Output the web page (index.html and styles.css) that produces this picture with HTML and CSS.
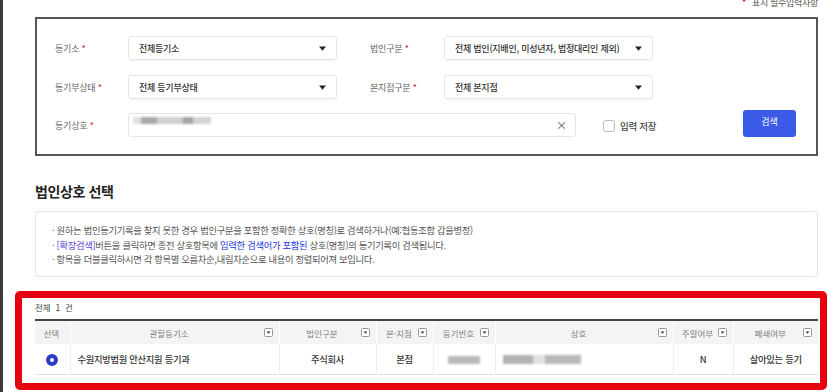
FILE: index.html
```html
<!DOCTYPE html>
<html lang="ko">
  <head>
    <title>법인상호 선택</title>
    <meta charset="UTF-8">
    <link rel="stylesheet" href="styles.css">
  </head>
  <body>
    <div class="page">
      <div class="top-note">
        <span class="req">*</span><span>표시 필수입력사항</span>
      </div>

      <div class="search-box">
        <div class="form-row">
          <label class="lbl">등기소 <span class="req">*</span></label>
          <div class="select">
            <span>전체등기소</span>
            <svg class="caret" width="7" height="5" viewBox="0 0 7 5"><path d="M0 0.5h7L3.5 4.8z" fill="#222"/></svg>
          </div>
          <label class="lbl lbl-2">법인구분 <span class="req">*</span></label>
          <div class="select">
            <span>전체 법인(지배인, 미성년자, 법정대리인 제외)</span>
            <svg class="caret" width="7" height="5" viewBox="0 0 7 5"><path d="M0 0.5h7L3.5 4.8z" fill="#222"/></svg>
          </div>
        </div>
        <div class="form-row row-2">
          <label class="lbl">등기부상태 <span class="req">*</span></label>
          <div class="select">
            <span>전체 등기부상태</span>
            <svg class="caret" width="7" height="5" viewBox="0 0 7 5"><path d="M0 0.5h7L3.5 4.8z" fill="#222"/></svg>
          </div>
          <label class="lbl lbl-2">본지점구분 <span class="req">*</span></label>
          <div class="select">
            <span>전체 본지점</span>
            <svg class="caret" width="7" height="5" viewBox="0 0 7 5"><path d="M0 0.5h7L3.5 4.8z" fill="#222"/></svg>
          </div>
        </div>
        <div class="form-row row-3">
          <label class="lbl">등기상호 <span class="req">*</span></label>
          <div class="text-input">
            <div class="masked">
              <i class="m1"></i><i class="m2"></i><i class="m3"></i><i class="m4"></i><i class="m5"></i>
            </div>
            <span class="clear">×</span>
          </div>
          <label class="save">
            <span class="checkbox"></span>
            <span>입력 저장</span>
          </label>
          <button class="btn-search">검색</button>
        </div>
      </div>

      <h2 class="section-title">법인상호 선택</h2>

      <div class="notice">
        <p>· 원하는 법인등기기록을 찾지 못한 경우 법인구분을 포함한 정확한 상호(명칭)로 검색하거나(예:협동조합 갑을병정)</p>
        <p>· <span class="purple">[확장검색]</span>버튼을 클릭하면 종전 상호항목에 <span class="blue">입력한 검색어가 포함된</span> 상호(명칭)의 등기기록이 검색됩니다.</p>
        <p>· 항목을 더블클릭하시면 각 항목별 오름차순,내림차순으로 내용이 정렬되어져 보입니다.</p>
      </div>

      <div class="result-box">
        <div class="count">전체 &nbsp;1 &nbsp;건</div>
        <table class="result">
          <colgroup>
            <col style="width:35px">
            <col style="width:209px">
            <col style="width:97px">
            <col style="width:57px">
            <col style="width:62px">
            <col style="width:178px">
            <col style="width:60px">
            <col style="width:85px">
          </colgroup>
          <thead>
            <tr>
              <th><div class="th-in"><span class="th-text">선택</span></div></th>
              <th><div class="th-in"><span class="th-text">관할등기소</span><svg class="filter" width="9" height="9" viewBox="0 0 9 9"><rect x="0.5" y="0.5" width="8" height="8" rx="1" fill="#fff" stroke="#999"/><path d="M2.6 3.6h3.8L4.5 5.8z" fill="#333"/></svg></div></th>
              <th><div class="th-in"><span class="th-text">법인구분</span><svg class="filter" width="9" height="9" viewBox="0 0 9 9"><rect x="0.5" y="0.5" width="8" height="8" rx="1" fill="#fff" stroke="#999"/><path d="M2.6 3.6h3.8L4.5 5.8z" fill="#333"/></svg></div></th>
              <th><div class="th-in"><span class="th-text">본·지점</span><svg class="filter" width="9" height="9" viewBox="0 0 9 9"><rect x="0.5" y="0.5" width="8" height="8" rx="1" fill="#fff" stroke="#999"/><path d="M2.6 3.6h3.8L4.5 5.8z" fill="#333"/></svg></div></th>
              <th><div class="th-in"><span class="th-text">등기번호</span><svg class="filter" width="9" height="9" viewBox="0 0 9 9"><rect x="0.5" y="0.5" width="8" height="8" rx="1" fill="#fff" stroke="#999"/><path d="M2.6 3.6h3.8L4.5 5.8z" fill="#333"/></svg></div></th>
              <th><div class="th-in"><span class="th-text">상호</span><svg class="filter" width="9" height="9" viewBox="0 0 9 9"><rect x="0.5" y="0.5" width="8" height="8" rx="1" fill="#fff" stroke="#999"/><path d="M2.6 3.6h3.8L4.5 5.8z" fill="#333"/></svg></div></th>
              <th><div class="th-in"><span class="th-text">주말여부</span><svg class="filter" width="9" height="9" viewBox="0 0 9 9"><rect x="0.5" y="0.5" width="8" height="8" rx="1" fill="#fff" stroke="#999"/><path d="M2.6 3.6h3.8L4.5 5.8z" fill="#333"/></svg></div></th>
              <th><div class="th-in"><span class="th-text">폐쇄여부</span><svg class="filter" width="9" height="9" viewBox="0 0 9 9"><rect x="0.5" y="0.5" width="8" height="8" rx="1" fill="#fff" stroke="#999"/><path d="M2.6 3.6h3.8L4.5 5.8z" fill="#333"/></svg></div></th>
            </tr>
          </thead>
          <tbody>
            <tr>
              <td class="center"><span class="radio"></span></td>
              <td class="left">수원지방법원 안산지원 등기과</td>
              <td class="center">주식회사</td>
              <td class="center">본점</td>
              <td class="center"><span class="masked-no"></span></td>
              <td class="left"><div class="masked-name"><i class="n1"></i><i class="n2"></i><i class="n3"></i></div></td>
              <td class="center">N</td>
              <td class="center">살아있는 등기</td>
            </tr>
          </tbody>
        </table>
      </div>
    </div>
  </body>
</html>
```

FILE: styles.css
```css
body {
  margin: 0;
  padding: 0;
  background-color: #fff;
  color: #333;
  font-family: 'Noto Sans CJK KR', 'Noto Sans', sans-serif;
  overflow: hidden;
}

.page {
  height: 392px;
  border-left: 3px solid #3a3a3a;
  padding: 0 17px 0 32px;
  box-sizing: border-box;
}

.req {
  color: #d7161e;
}

/* top right note */
.top-note {
  height: 17px;
  display: flex;
  justify-content: flex-end;
  align-items: flex-start;
  gap: 6px;
  font-size: 9px;
  color: #555;
  letter-spacing: -0.3px;
}

.top-note span {
  line-height: 10px;
  margin-top: -2px;
}

/* search form */
.search-box {
  border: 2px solid #555;
  padding: 17px 18px 17px 18px;
}

.form-row {
  display: flex;
  align-items: center;
  height: 24px;
  margin-bottom: 15px;
}

.form-row.row-2 {
  margin-bottom: 11px;
}

.form-row.row-3 {
  height: 27px;
  margin-bottom: 0;
  align-items: flex-end;
}

.lbl {
  width: 73px;
  font-size: 9px;
  color: #666;
  letter-spacing: -0.2px;
}

.row-3 .lbl {
  align-self: center;
  padding-top: 4px;
}

.lbl-2 {
  width: 74px;
  margin-left: 33px;
}

.select {
  width: 209px;
  height: 24px;
  box-sizing: border-box;
  border: 1px solid #e6e6e6;
  border-radius: 3px;
  box-shadow: 0 1px 1px rgba(0, 0, 0, 0.04);
  display: flex;
  align-items: center;
  justify-content: space-between;
  padding: 0 10px 0 10px;
  font-size: 9px;
  font-weight: 500;
  color: #333;
  letter-spacing: -0.25px;
}

.caret {
  flex: 0 0 auto;
}

.text-input {
  width: 448px;
  height: 24px;
  box-sizing: border-box;
  border: 1px solid #e6e6e6;
  border-radius: 3px;
  display: flex;
  align-items: center;
  justify-content: space-between;
  padding: 0 8px 0 4px;
}

.masked {
  display: flex;
  width: 90px;
  height: 22px;
  flex-wrap: wrap;
  filter: blur(0.8px);
}

.masked i {
  display: block;
  height: 7px;
  margin-top: 3px;
}

.masked .m1 { width: 8px; background: #e2e2e2; }
.masked .m2 { width: 16px; background: #a9a9a9; }
.masked .m3 { width: 26px; background: #cfcfcf; }
.masked .m4 { width: 10px; background: #a5a5a5; }
.masked .m5 { width: 18px; background: #d4d4d4; }

.clear {
  font-size: 11px;
  color: #555;
}

.save {
  display: flex;
  align-items: center;
  gap: 5px;
  margin-left: 27px;
  align-self: center;
  padding-top: 4px;
  font-size: 9.5px;
  font-weight: 500;
  color: #444;
  letter-spacing: -0.3px;
}

.checkbox {
  width: 12px;
  height: 12px;
  box-sizing: border-box;
  border: 1px solid #bbb;
  border-radius: 3px;
}

.btn-search {
  margin-left: auto;
  margin-right: 2px;
  width: 53px;
  height: 27px;
  border: none;
  border-radius: 3px;
  background-color: #3b5ae8;
  color: #fff;
  font-family: inherit;
  font-size: 9px;
  padding: 0 0 4px;
}

/* section title */
.section-title {
  margin: 25px 0 10px;
  font-size: 14px;
  line-height: 20px;
  font-weight: 700;
  color: #222;
  letter-spacing: -0.4px;
}

.notice {
  border: 1px solid #e3e3e3;
  border-radius: 3px;
  padding: 11px 16px 10px;
  height: 66px;
  box-sizing: border-box;
}

.notice p {
  margin: 0;
  font-size: 9.3px;
  line-height: 14.5px;
  color: #555;
  letter-spacing: -0.3px;
}

.notice .purple {
  color: #5b3fd8;
}

.notice .blue {
  color: #2233e0;
}

/* result (highlighted) */
.result-box {
  margin: 14px -9px 0 -20px;
  border: 7px solid #e60010;
  border-radius: 5px;
  padding: 2px 2px 8px 13px;
}

.count {
  font-size: 8.5px;
  line-height: 14px;
  color: #444;
  margin-bottom: 5px;
}

.result {
  width: 783px;
  border-collapse: collapse;
  table-layout: fixed;
  border-top: 2px solid #444;
  border-bottom: 1px solid #e3e3e3;
}

.result th {
  height: 23px;
  padding: 0;
  background-color: #f4f4f4;
  font-weight: 400;
  font-size: 8.5px;
  color: #808080;
  border-left: 1px solid #fff;
}

.result th:first-child,
.result td:first-child {
  border-left: none;
}

.th-in {
  display: flex;
  align-items: center;
  padding: 0 6px 0 4px;
}

.th-text {
  flex: 1;
  text-align: center;
  white-space: nowrap;
}

.filter {
  flex: 0 0 auto;
}

.result td {
  height: 30px;
  padding: 0;
  font-size: 9.3px;
  font-weight: 500;
  color: #333;
  border-left: 1px solid #eee;
  letter-spacing: -0.3px;
}

.result td.center {
  text-align: center;
}

.result td.left {
  padding-left: 7px;
}

.radio {
  display: inline-block;
  width: 12px;
  height: 12px;
  box-sizing: border-box;
  border: 4px solid #2c3cc4;
  border-radius: 50%;
  background: #fff;
  vertical-align: middle;
}

.masked-no {
  display: inline-block;
  width: 32px;
  height: 8px;
  background: #b9b9b9;
  filter: blur(0.8px);
  vertical-align: middle;
}

.masked-name {
  display: flex;
  flex-wrap: wrap;
  width: 80px;
  filter: blur(0.8px);
}

.masked-name i {
  display: block;
  height: 9px;
}

.masked-name .n1 { width: 30px; background: #b3b3b3; }
.masked-name .n2 { width: 12px; background: #e0e0e0; }
.masked-name .n3 { width: 36px; background: #b8b8b8; }
```
